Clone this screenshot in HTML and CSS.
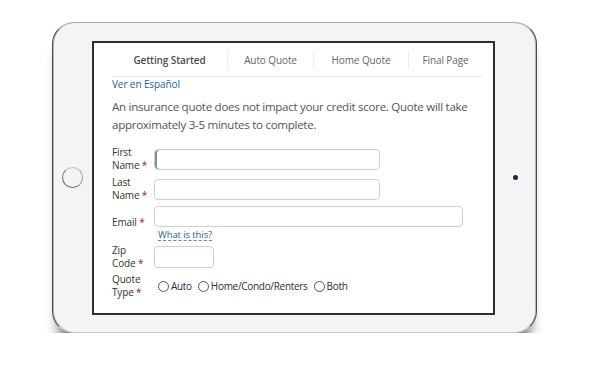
FILE: index.html
```html
<!doctype html>
<html lang="en">
  <head>
    <meta charset="UTF-8" />
    <title>Get a Quote</title>
    <link rel="stylesheet" href="styles.css">
  </head>
  <body>
    <!-- Tablet mockup: home button, screen, camera -->
    <div class="tablet">
      <div class="side">
        <span class="home-button"></span>
      </div>

      <div class="screen">
        <div class="tabs">
          <div class="tab tab-start active">Getting Started</div>
          <div class="tab tab-auto">Auto Quote</div>
          <div class="tab tab-home">Home Quote</div>
          <div class="tab tab-final">Final Page</div>
        </div>

        <a class="lang-link" href="#">Ver en Español</a>

        <p class="intro">
          An insurance quote does not impact your credit score. Quote will take
          approximately 3-5 minutes to complete.
        </p>

        <form class="quote-form">
          <div class="row">
            <label class="label">First Name <span class="req">*</span></label>
            <div class="field"><input class="input name focused" type="text" /></div>
          </div>
          <div class="row">
            <label class="label">Last Name <span class="req">*</span></label>
            <div class="field"><input class="input name" type="text" /></div>
          </div>
          <div class="row">
            <label class="label">Email <span class="req">*</span></label>
            <div class="field">
              <input class="input email" type="text" />
              <a class="help" href="#">What is this?</a>
            </div>
          </div>
          <div class="row">
            <label class="label">Zip Code <span class="req">*</span></label>
            <div class="field"><input class="input zip" type="text" /></div>
          </div>
          <div class="row row-last">
            <label class="label">Quote Type <span class="req">*</span></label>
            <div class="field radios">
              <label class="radio"><span class="dot"></span>Auto</label>
              <label class="radio"><span class="dot"></span>Home/Condo/Renters</label>
              <label class="radio"><span class="dot"></span>Both</label>
            </div>
          </div>
        </form>
      </div>

      <div class="side side-right">
        <span class="camera"></span>
      </div>
    </div>
  </body>
</html>
```

FILE: styles.css
```css
/* Colours */
:root {
  --frame-bg: #f3f4f6;
  --text: #333333;
  --muted: #555555;
  --link: #2a5d96;
  --required: #9b1b30;
  --line: #e9e9e9;
}

body {
  margin: 0;
  background: #ffffff;
  font-family: "Open Sans", "Noto Sans", sans-serif;
  color: var(--text);
}

/* Tablet frame */
.tablet {
  box-sizing: border-box;
  width: 485px;
  height: 311px;
  margin: 22px 0 0 52px;
  display: flex;
  align-items: center;
  background: var(--frame-bg);
  border: 1px solid #a9a9a9;
  border-left-color: #4a4a4a;
  border-right-color: #4a4a4a;
  border-bottom-color: #c8c8c8;
  border-radius: 22px;
  box-shadow: inset 1px 0 0 #b5b5b5, inset -1px 0 0 #b5b5b5,
    0 18px 12px -6px rgba(0, 0, 0, 0.5);
}

.side {
  width: 39px;
  display: flex;
  justify-content: center;
}

.side-right {
  width: 41px;
}

.home-button {
  width: 19px;
  height: 19px;
  border-radius: 50%;
  border: 1.5px solid #6f6f6f;
  border-top-color: #c4c4c4;
  border-right-color: #9a9a9a;
}

.camera {
  width: 5px;
  height: 5px;
  border-radius: 50%;
  background: #222a33;
}

/* Screen */
.screen {
  box-sizing: border-box;
  width: 403px;
  height: 274px;
  padding: 0 11px 0 18px;
  background: #ffffff;
  border: 2px solid #2f2f2f;
  overflow: hidden;
}

/* Step tabs */
.tabs {
  display: flex;
  padding: 8px 0 7px;
  border-bottom: 1px solid var(--line);
}

.tab {
  height: 18px;
  line-height: 18px;
  text-align: center;
  font-size: 10px;
  letter-spacing: -0.1px;
  color: #666;
  border-left: 1px solid #ececec;
}

.tab-start {
  width: 115px;
  border-left: none;
}

.tab-auto {
  width: 85px;
}

.tab-home {
  width: 94px;
}

.tab-final {
  flex: 1;
}

.tab.active {
  font-weight: 600;
  color: #4a4a4a;
}

.lang-link {
  display: block;
  line-height: 14px;
  font-size: 10px;
  letter-spacing: -0.1px;
  color: var(--link);
  text-decoration: none;
}

.intro {
  margin: 7px 0 0;
  font-size: 11.6px;
  letter-spacing: -0.3px;
  line-height: 18px;
  color: var(--muted);
}

/* Form */
.quote-form {
  margin-top: 12px;
  display: flex;
  flex-direction: column;
  gap: 3px;
}

.row {
  display: flex;
  align-items: center;
}

.row-last {
  margin-top: -1px;
}

.label {
  width: 36px;
  margin-right: 6px;
  flex-shrink: 0;
  font-size: 10px;
  letter-spacing: -0.15px;
  line-height: 13.5px;
  color: var(--text);
}

.req {
  color: var(--required);
}

.field {
  display: flex;
  flex-direction: column;
  align-items: flex-start;
}

.input {
  box-sizing: border-box;
  height: 21px;
  margin: 0;
  border: 1px solid #cfcfcf;
  border-radius: 4px;
  background: #fff;
  font: inherit;
}

.input.focused {
  box-shadow: inset 2px 0 0 #8a8a8a;
}

.name {
  width: 226px;
}

.email {
  width: 309px;
}

.zip {
  width: 60px;
  height: 22px;
}

.help {
  margin: 2px 0 0 4px;
  font-size: 9.5px;
  letter-spacing: -0.1px;
  line-height: 11px;
  color: var(--link);
  text-decoration: none;
  border-bottom: 1px dashed #5b86bb;
}

.radios {
  flex-direction: row;
  align-items: center;
  gap: 6px;
  padding-left: 4px;
}

.radio {
  display: flex;
  align-items: center;
  gap: 2px;
  font-size: 10px;
  letter-spacing: -0.3px;
  color: #2b2b3a;
}

.dot {
  box-sizing: border-box;
  width: 11px;
  height: 11px;
  border-radius: 50%;
  border: 1px solid #555;
  background: #fff;
}
```
